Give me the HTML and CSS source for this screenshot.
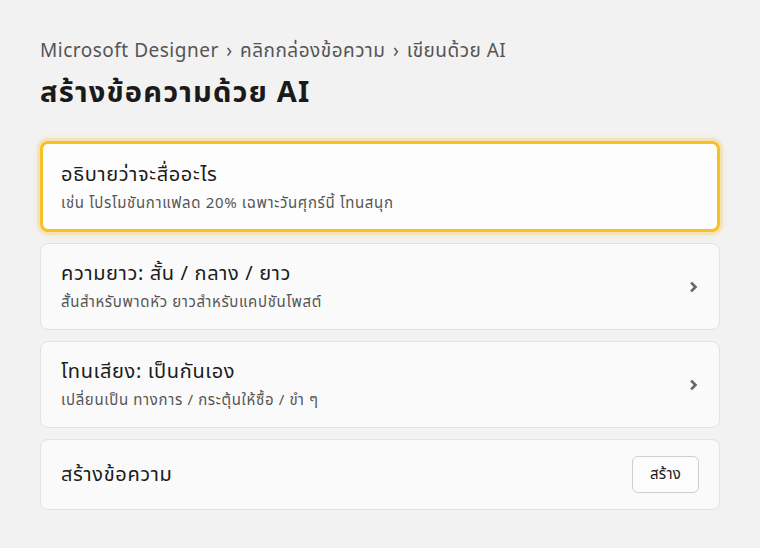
FILE: index.html
```html
<!DOCTYPE html>
<html lang="th">
<head>
<meta charset="utf-8">
<title>สร้างข้อความด้วย AI</title>
<link rel="stylesheet" href="styles.css">
</head>
<body>
<main class="page">
  <nav class="crumbs">Microsoft Designer <span class="sep">›</span> คลิกกล่องข้อความ <span class="sep">›</span> เขียนด้วย AI</nav>
  <h1 class="title">สร้างข้อความด้วย AI</h1>

  <div class="list">
    <div class="card card-active">
      <div class="card-text">
        <div class="card-title">อธิบายว่าจะสื่ออะไร</div>
        <div class="card-sub">เช่น โปรโมชันกาแฟลด 20% เฉพาะวันศุกร์นี้ โทนสนุก</div>
      </div>
    </div>

    <div class="card">
      <div class="card-text">
        <div class="card-title">ความยาว: สั้น / กลาง / ยาว</div>
        <div class="card-sub">สั้นสำหรับพาดหัว ยาวสำหรับแคปชันโพสต์</div>
      </div>
      <svg class="chev" width="10" height="12" viewBox="0 0 10 12"><path d="M3 2.5 L6.5 6 L3 9.5" fill="none" stroke="#666" stroke-width="2.6" stroke-linecap="square" stroke-linejoin="miter"/></svg>
    </div>

    <div class="card">
      <div class="card-text">
        <div class="card-title">โทนเสียง: เป็นกันเอง</div>
        <div class="card-sub">เปลี่ยนเป็น ทางการ / กระตุ้นให้ซื้อ / ขำ ๆ</div>
      </div>
      <svg class="chev" width="10" height="12" viewBox="0 0 10 12"><path d="M3 2.5 L6.5 6 L3 9.5" fill="none" stroke="#666" stroke-width="2.6" stroke-linecap="square" stroke-linejoin="miter"/></svg>
    </div>

    <div class="card card-action">
      <div class="card-title">สร้างข้อความ</div>
      <button class="btn" type="button">สร้าง</button>
    </div>
  </div>
</main>
</body>
</html>
```

FILE: styles.css
```css
* { box-sizing: border-box; }

html, body {
  margin: 0;
  background: #f2f2f2;
}

body {
  font-family: "Noto Sans Thai", "Noto Sans", "DejaVu Sans", sans-serif;
  color: #1b1b1b;
}

.page {
  padding: 38px 40px 0 40px;
}

.crumbs {
  font-size: 19px;
  line-height: 28px;
  letter-spacing: 0.5px;
  color: #555;
}

.crumbs .sep {
  margin: 0 2px;
}

.title {
  margin: 7px 0 0 0;
  font-size: 29px;
  line-height: 40px;
  letter-spacing: 1.2px;
  font-weight: 700;
  color: #1a1a1a;
}

.list {
  margin-top: 28px;
  display: flex;
  flex-direction: column;
  gap: 11px;
}

.card {
  display: flex;
  align-items: center;
  justify-content: space-between;
  background: #fafafa;
  border: 1px solid #e2e2e2;
  border-radius: 8px;
  padding: 16px 25px 15px 20px;
}

.card-active {
  border: 3px solid #f9bf27;
  box-shadow: 0 0 0 3px rgba(249, 191, 39, 0.22), 0 0 6px 3px rgba(249, 191, 39, 0.12);
  padding: 17px 18px 14px 18px;
  background: #fdfdfd;
}

.card-title {
  font-size: 20px;
  line-height: 28px;
  letter-spacing: 0.65px;
  color: #1b1b1b;
}

.card-sub {
  margin-top: 4px;
  font-size: 15px;
  line-height: 22px;
  letter-spacing: 0.65px;
  color: #555;
}

.chev {
  display: block;
  margin-right: -5px;
}

.card-action {
  height: 71px;
  padding: 0 20px;
}

.btn {
  font-family: inherit;
  font-size: 15px;
  letter-spacing: 0.3px;
  height: 37px;
  width: 67px;
  background: #fcfcfc;
  border: 1px solid #cfcfcf;
  border-radius: 6px;
  color: #1b1b1b;
}
```
